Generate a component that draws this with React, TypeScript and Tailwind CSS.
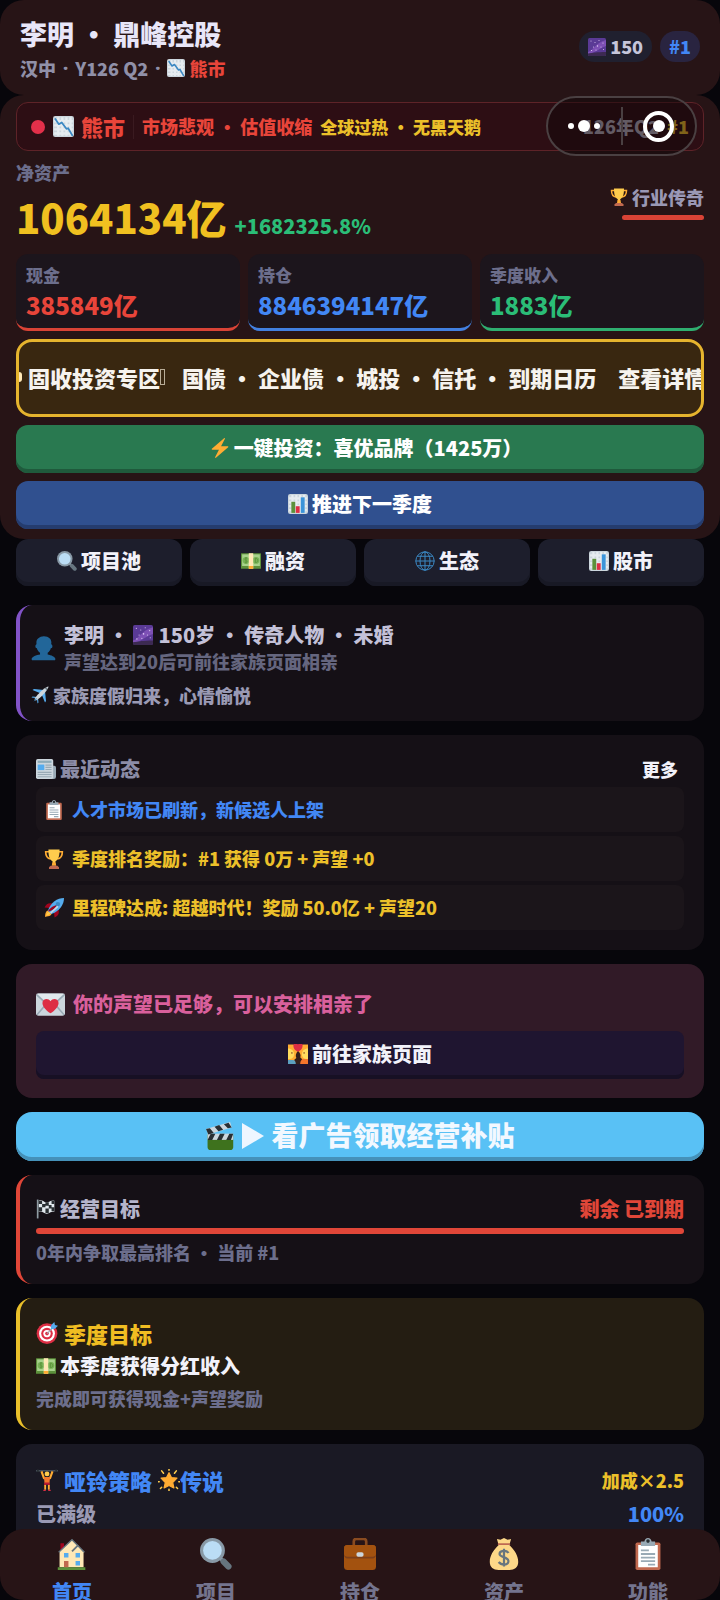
import React from 'react';

type IconProps = { className?: string };

const Glyph: React.FC<IconProps & { children: React.ReactNode }> = ({ className = 'size-5', children }) => (
  <svg viewBox="0 0 36 36" className={`inline-block shrink-0 ${className}`} aria-hidden="true">
    {children}
  </svg>
);

const ChartDown: React.FC<IconProps> = (p) => (
  <Glyph {...p}>
    <rect width="36" height="36" rx="4" fill="#ccd6dd" />
    <path d="M2 9h32M2 16h32M2 23h32M2 30h32M9 2v32M16 2v32M23 2v32M30 2v32" stroke="#e6ecf0" strokeWidth="4" />
    <path d="M4 5l6 9 5-3 8 11 3-1 7 12" fill="none" stroke="#3b88c3" strokeWidth="3" strokeLinejoin="round" strokeLinecap="round" />
  </Glyph>
);

const BarChart: React.FC<IconProps> = (p) => (
  <Glyph {...p}>
    <rect width="36" height="36" rx="4" fill="#ccd6dd" />
    <path d="M2 8h32M2 15h32M2 22h32M2 29h32M8 2v32M15 2v32M22 2v32M29 2v32" stroke="#e6ecf0" strokeWidth="4" />
    <path fill="#5c913b" d="M6 14h7v20H6z" />
    <path fill="#dd2e44" d="M14 22h7v12h-7z" />
    <path fill="#3b94d9" d="M23 6h7v28h-7z" />
  </Glyph>
);

const Galaxy: React.FC<IconProps> = (p) => (
  <Glyph {...p}>
    <rect width="36" height="36" rx="3" fill="#5a3a96" />
    <path d="M0 28C10 26 14 10 36 4v12C22 20 16 30 0 32z" fill="#7d50b5" />
    <path d="M0 31c10-1 18-3 36-3v5a3 3 0 0 1-3 3H3a3 3 0 0 1-3-3z" fill="#3c2a52" />
    <g fill="#e1cdf7">
      <circle cx="6" cy="6" r="1" /><circle cx="14" cy="9" r="1" /><circle cx="22" cy="5" r="1" />
      <circle cx="30" cy="10" r="1.2" /><circle cx="19" cy="16" r="1.4" /><circle cx="11" cy="18" r="1" />
      <circle cx="26" cy="18" r="1" /><circle cx="31" cy="23" r="1" /><circle cx="7" cy="25" r="1.2" />
      <circle cx="16" cy="24" r="1" />
    </g>
  </Glyph>
);

const Trophy: React.FC<IconProps> = (p) => (
  <Glyph {...p}>
    <path d="M9 5H3c0 8 3 12 9 13M27 5h6c0 8-3 12-9 13" fill="none" stroke="#ffac33" strokeWidth="3" />
    <path d="M8 1h20c0 10-1 17-7 21-1 1-1 3-1 7h-4c0-4 0-6-1-7C9 18 8 11 8 1z" fill="#ffcc4d" />
    <path d="M15 24h6l1 6h-8z" fill="#ffac33" />
    <path d="M12 30h12l3 3v3H9v-3z" fill="#c1694f" />
  </Glyph>
);

const Bolt: React.FC<IconProps> = (p) => (
  <Glyph {...p}>
    <path fill="#ffac33" d="M32.9 15.7c-.1-.4-.5-.7-.9-.7H19.9L26.9 1.5c.2-.4.1-.9-.3-1.2-.4-.3-.9-.3-1.3 0L18 6.6 3.3 19.2c-.3.3-.4.7-.3 1.1.2.4.6.7 1 .7h12.1L9.1 34.5c-.2.4-.1.9.3 1.2.4.3.9.3 1.3 0L18 29.4l14.7-12.7c.3-.2.4-.7.2-1z" />
  </Glyph>
);

const Magnifier: React.FC<IconProps> = (p) => (
  <Glyph {...p}>
    <path d="M22 22l4 4" stroke="#9aaab4" strokeWidth="4" />
    <path d="M26.5 26.5l5.500 5.500" stroke="#66757f" strokeWidth="7" strokeLinecap="round" />
    <circle cx="14" cy="14" r="14" fill="#8899a6" />
    <circle cx="14" cy="14" r="10.5" fill="#bbddf5" />
  </Glyph>
);

const Banknote: React.FC<IconProps> = (p) => (
  <Glyph {...p}>
    <rect y="4" width="36" height="28" rx="1" fill="#5c913b" />
    <rect x="2" y="6" width="32" height="21" fill="#a7d28b" />
    <circle cx="9" cy="17" r="6" fill="#77b255" />
    <circle cx="27" cy="17" r="6" fill="#77b255" />
    <path d="M11 13c-4-2-5 3-2 4s2 5-2 3M9 11v12M26 13c5 0 6 8 0 8z" fill="none" stroke="#5c913b" strokeWidth="1.5" />
    <path d="M14 4h8v28h-8z" fill="#ffe8b6" />
    <path d="M14 27h8v5h-8z" fill="#ffac33" />
  </Glyph>
);

const Globe: React.FC<IconProps> = (p) => (
  <Glyph {...p}>
    <g fill="none" stroke="#3b88c3" strokeWidth="1.8">
      <circle cx="18" cy="18" r="16.5" />
      <ellipse cx="18" cy="18" rx="9" ry="16.5" />
      <path d="M18 1v34M1 18h34M4 9.5h28M4 26.5h28" />
    </g>
  </Glyph>
);

const Bust: React.FC<IconProps> = (p) => (
  <Glyph {...p}>
    <path fill="#226699" d="M24 26.799v-2.566c2-1.348 4.080-3.779 4.703-6.896.186.103.206.170.413.170.991 0 1.709-1.287 1.709-2.873 0-1.562-.823-2.827-1.794-2.865.187-.674.293-1.577.293-2.735C29.324 5.168 26 .527 18.541.527c-6.629 0-10.777 4.641-10.777 8.507 0 1.123.069 2.043.188 2.755-.911.137-1.629 1.352-1.629 2.845 0 1.587.804 2.873 1.796 2.873.206 0 .025-.067.209-.170C8.952 20.453 11 22.885 13 24.232v2.414c-5 .645-12 3.437-12 6.230v1.061C1 35 2.076 35 3.137 35h29.725C33.924 35 35 35 35 33.938v-1.061c0-2.615-6-5.225-11-6.078z" />
  </Glyph>
);

const Plane: React.FC<IconProps> = (p) => (
  <Glyph {...p}>
    <path d="M20 15L3 8l3-2 20 2zM21 16l7 17 2-3-2-20zM9 24l-8-1 2-2 9 1zM12 27l1 8 2-2-1-9z" fill="#55acee" />
    <path d="M8 24C14 16 24 5 34 1c1 0 1 1 1 1-4 10-15 20-23 26-3 2-6 0-4-4z" fill="#ccd6dd" />
    <path d="M10 24L5 31l7-5z" fill="#3b88c3" />
    <path d="M30 3l3 3-2 2-3-3z" fill="#66757f" />
  </Glyph>
);

const Newspaper: React.FC<IconProps> = (p) => (
  <Glyph {...p}>
    <path d="M26 12h7a3 3 0 0 1 3 3v17a4 4 0 0 1-4 4h-6z" fill="#99aab5" />
    <rect width="31" height="36" rx="3" fill="#ccd6dd" />
    <path d="M3 3h25v4H3z" fill="#8dabb8" />
    <path d="M3 10h12v10H3z" fill="#55acee" />
    <path d="M17 11h11M17 15h11M17 19h11M3 24h25M3 28h25M3 32h25" stroke="#99aab5" strokeWidth="2" />
  </Glyph>
);

const Clipboard: React.FC<IconProps> = (p) => (
  <Glyph {...p}>
    <rect x="4" y="5" width="28" height="31" rx="2" fill="#c1694f" />
    <path d="M7 8h22v25H7z" fill="#fff" />
    <path d="M10 4h4c0-2 2-4 4-4s4 2 4 4h4v5H10z" fill="#99aab5" />
    <circle cx="18" cy="3.5" r="2" fill="#292f33" />
    <path d="M10 14h9M10 18h16M10 22h16M10 26h16M18 30h8" stroke="#99aab5" strokeWidth="2" />
  </Glyph>
);

const Rocket: React.FC<IconProps> = (p) => (
  <Glyph {...p}>
    <path d="M1 17c3-7 8-9 14-7l-5 8zM19 35c7-3 9-8 7-14l-8 5z" fill="#a0041e" />
    <path d="M2 34c0-7 2-12 7-12s7 6 3 9c-3 2-6 2-10 3z" fill="#ffac33" />
    <path d="M4 32c1-4 2-7 5-7 2 0 3 3 1 4-2 2-4 2-6 3z" fill="#ffcc4d" />
    <path d="M36 0C24 0 12 8 7 23l6 6C28 24 36 12 36 0z" fill="#55acee" />
    <path d="M9 21c-2 2-1 4 1 3 6-2 11-7 14-12C17 14 12 17 9 21z" fill="#a0041e" />
    <circle cx="25" cy="11" r="4" fill="#3b88c3" />
    <path d="M12 27l13-12" stroke="#ccd6dd" strokeWidth="3" />
  </Glyph>
);

const LoveLetter: React.FC<IconProps> = ({ className = 'h-6 w-7' }) => (
  <svg viewBox="0 0 36 28" className={`inline-block shrink-0 ${className}`} aria-hidden="true">
    <rect width="36" height="28" rx="3" fill="#ccd6dd" />
    <path d="M1 27l12-14M35 27L23 13M1 2l15 14c1 1 3 1 4 0L35 2" stroke="#99aab5" strokeWidth="2" fill="none" />
    <path d="M2 1h32L19 15h-2z" fill="#e1e8ed" />
    <path d="M18 25C12 21 8 16 8 12c0-5 7-7 10-2 3-5 10-3 10 2 0 4-4 9-10 13z" fill="#dd2e44" />
  </svg>
);

const Couple: React.FC<IconProps> = (p) => (
  <Glyph {...p}>
    <path d="M0 1h10l8 12L26 1h10v35H0z" fill="#ffac33" />
    <path d="M18 12c-4 5-5 9-3 13l-4 4 2 7h10l3-8-4-4c2-3 0-8-4-12z" fill="#35201b" />
    <path d="M0 8c6 0 11 4 11 11 0 5-4 8-8 8H0zM36 8c-6 0-11 4-11 11 0 5 4 8 8 8h3z" fill="#ffdc5d" />
    <path d="M18 14c-7-3-9-8-8-14h7l1 1 1-1h7c1 6-1 11-8 14z" fill="#dd2e44" />
    <path d="M0 29h9c3 0 5 3 5 7H0z" fill="#5c9fc0" />
    <path d="M36 27h-9c-3 1-5 4-5 9h14z" fill="#f4762c" />
    <circle cx="7" cy="16" r="1.3" fill="#662113" />
    <circle cx="29" cy="16" r="1.3" fill="#662113" />
  </Glyph>
);

const Clapper: React.FC<IconProps> = (p) => (
  <Glyph {...p}>
    <path d="M2 16h33v16a4 4 0 0 1-4 4H6a4 4 0 0 1-4-4z" fill="#3e721d" />
    <path d="M2 15h33v8H2z" fill="#ccd6dd" />
    <path d="M6 15h6l-4 8H2zM18 15h6l-4 8h-6zM30 15h5l-3 8h-6z" fill="#292f33" />
    <path d="M0 9L31 0l2 7L3 16z" fill="#ccd6dd" />
    <path d="M0 9l5-1 5 6-7 2zM11 6l6-2 5 6-6 2zM23 3l6-2 4 6-5 1z" fill="#292f33" />
  </Glyph>
);

const PlayMark: React.FC<IconProps> = ({ className = 'size-6' }) => (
  <svg viewBox="0 0 22 26" className={`inline-block shrink-0 ${className}`} aria-hidden="true">
    <path d="M0 0l22 13L0 26z" fill="#eef6ff" />
  </svg>
);

const RaceFlag: React.FC<IconProps> = (p) => (
  <Glyph {...p}>
    <path d="M3 1v34" stroke="#8f9ca3" strokeWidth="3" />
    <path d="M5 3c7-3 10 5 16 3 5-2 7-4 12-3v20c-5-1-7 1-12 3-6 2-9-5-16-3z" fill="#e1e8ed" />
    <path d="M5 3h6v6H5zM17 6h6v6h-6zM28 3h5v6h-5zM11 9h6v6h-6zM23 11h5v6h-5zM5 15h6v7H5zM17 17h6v8h-6zM28 15h5v7h-5z" fill="#292f33" />
  </Glyph>
);

const Target: React.FC<IconProps> = (p) => (
  <Glyph {...p}>
    <circle cx="18" cy="19" r="17" fill="#dd2e44" />
    <circle cx="18" cy="19" r="13" fill="#fff" />
    <circle cx="18" cy="19" r="9.5" fill="#dd2e44" />
    <circle cx="18" cy="19" r="6" fill="#fff" />
    <circle cx="18" cy="19" r="3" fill="#dd2e44" />
    <path d="M18 19L29 8" stroke="#99aab5" strokeWidth="2" />
    <path d="M24 12l1-7 5-5 1 5 5 1-5 5z" fill="#55acee" />
  </Glyph>
);

const Lifter: React.FC<IconProps> = (p) => (
  <Glyph {...p}>
    <path d="M0 3h36" stroke="#66757f" strokeWidth="1.5" />
    <path d="M3 1v4M33 1v4" stroke="#292f33" strokeWidth="3" />
    <path d="M9 4l4 11h10l4-11" fill="none" stroke="#ffac33" strokeWidth="3.5" strokeLinejoin="round" />
    <circle cx="18" cy="8" r="4" fill="#ffcc4d" />
    <path d="M13 13h10l-1 11h-8z" fill="#f4762c" />
    <path d="M14 22h8l1 5h-3l-2-2-2 2h-3z" fill="#be1931" />
    <path d="M15 26v8M21 26v8" stroke="#ffac33" strokeWidth="3" />
    <path d="M12 35h4M20 35h4" stroke="#dd2e44" strokeWidth="2" />
  </Glyph>
);

const GlowStar: React.FC<IconProps> = (p) => (
  <Glyph {...p}>
    <path d="M18 6l4 8 9 1-7 7 2 9-8-4-8 4 2-9-7-7 9-1z" fill="#ffac33" stroke="#ffac33" strokeWidth="2" strokeLinejoin="round" />
    <path d="M18 0v2M6 3l3 4M30 3l-3 4M0 21h2M34 21h2M4 32l2-2M32 32l-2-2M18 33v3" stroke="#ffcc4d" strokeWidth="2.5" strokeLinecap="round" />
  </Glyph>
);

const House: React.FC<IconProps> = (p) => (
  <Glyph {...p}>
    <path d="M5 6h4v8H5z" fill="#a0041e" />
    <path d="M4 15L18 2l13 14v17H4z" fill="#ffe8b6" />
    <path d="M3 16L18 2l14 14" fill="none" stroke="#66757f" strokeWidth="1.5" />
    <path d="M18 15l7-7" stroke="#66757f" strokeWidth="2" />
    <path d="M9 17h5v5H9zM22 17h5v5h-5zM22 26h5v5h-5z" fill="#55acee" />
    <path d="M9 26h5v8H9z" fill="#c1694f" />
    <path d="M2 33h31v3H2z" fill="#5c913b" />
  </Glyph>
);

const Briefcase: React.FC<IconProps> = (p) => (
  <Glyph {...p}>
    <path d="M11 9V4c0-2 1-3 3-3h8c2 0 3 1 3 3v5" fill="none" stroke="#8a4b20" strokeWidth="3" />
    <rect y="8" width="36" height="28" rx="4" fill="#a3520f" />
    <path d="M4 8h28a4 4 0 0 1 4 4v7c0 2-2 4-4 4H4c-2 0-4-2-4-4v-7a4 4 0 0 1 4-4z" fill="#7c3f1a" />
    <path d="M4 8h28a4 4 0 0 1 4 4v6c0 2-2 3-4 3H4c-2 0-4-1-4-3v-6a4 4 0 0 1 4-4z" fill="#a3520f" />
    <rect x="14" y="16" width="8" height="5" rx="2" fill="#ccd6dd" />
  </Glyph>
);

const MoneyBag: React.FC<IconProps> = (p) => (
  <Glyph {...p}>
    <path d="M12 8L10 1l4 1 4-2 4 2 4-1-2 7c6 6 10 12 10 19 0 6-4 9-10 9H12c-6 0-10-3-10-9C2 20 6 14 12 8z" fill="#fdd888" />
    <path d="M12 7h12" stroke="#bf6952" strokeWidth="2" strokeLinecap="round" />
    <path d="M23 17c-2-4-10-3-10 1s10 3 10 8-8 5-11 1M18 12v20" fill="none" stroke="#67757f" strokeWidth="2.5" />
  </Glyph>
);

const stats = [
  { label: '现金', value: '385849亿', style: 'border-[#d94336] text-[#e8453a]' },
  { label: '持仓', value: '8846394147亿', style: 'border-[#4280e0] text-[#4287f5]' },
  { label: '季度收入', value: '1883亿', style: 'border-[#2fae70] text-[#2bbd77]' }
];

const shortcuts = [
  { label: '项目池', icon: Magnifier },
  { label: '融资', icon: Banknote },
  { label: '生态', icon: Globe },
  { label: '股市', icon: BarChart }
];

const news = [
  { text: '人才市场已刷新，新候选人上架', icon: Clipboard, color: 'text-[#4287f5]' },
  { text: '季度排名奖励：#1 获得 0万 + 声望 +0', icon: Trophy, color: 'text-[#ecc02a]' },
  { text: '里程碑达成: 超越时代！奖励 50.0亿 + 声望20', icon: Rocket, color: 'text-[#ecc02a]' }
];

const tabs = [
  { label: '首页', icon: House, active: true },
  { label: '项目', icon: Magnifier, active: false },
  { label: '持仓', icon: Briefcase, active: false },
  { label: '资产', icon: MoneyBag, active: false },
  { label: '功能', icon: Clipboard, active: false }
];

const Header: React.FC = () => (
  <header className="flex items-start justify-between rounded-3xl bg-[#271416] px-5 pt-4 pb-[13px]">
    <div className="flex flex-col gap-0.5">
      <h1 className="text-[27px] leading-9 text-[#e8e6f8]">李明 • 鼎峰控股</h1>
      <p className="flex items-center gap-[7px] text-[18px] leading-7 text-[#9090a8]">
        <span>汉中</span>
        <span className="font-['Noto_Sans',sans-serif]">·</span>
        <span>Y126 Q2</span>
        <span className="font-['Noto_Sans',sans-serif]">·</span>
        <span className="flex items-center gap-1 text-[#e8453a]">
          <ChartDown className="size-[18px]" />
          熊市
        </span>
      </p>
    </div>
    <div className="mt-[15px] flex gap-2 text-[18px] leading-[31px]">
      <span className="flex items-center gap-1 rounded-2xl bg-[#20202f] px-[9px] text-[#c5c5da]">
        <Galaxy className="size-[18px]" />
        150
      </span>
      <span className="rounded-2xl bg-[#292440] px-[9px] text-[#4287f5]">#1</span>
    </div>
  </header>
);

const MarketBar: React.FC = () => (
  <div className="relative flex h-[49px] items-center rounded-xl border border-[#5e2328] bg-[#2d0e14] px-3.5 whitespace-nowrap">
    <span className="size-3.5 rounded-full bg-[#e2304a]" />
    <ChartDown className="ml-2 size-[21px]" />
    <span className="ml-[7px] text-[22px] text-[#e8453a]">熊市</span>
    <span className="ml-2 h-6 w-px bg-[#3a1a20]" />
    <span className="ml-2 text-[18px] text-[#e8453a]">市场悲观 • 估值收缩</span>
    <span className="ml-2 text-[17px] text-[#ecc02a]">全球过热 • 无黑天鹅</span>
    <span className="ml-auto text-[18px] text-[#b4b0c0]">126年Q2</span>
    <span className="ml-2 text-[18px] text-[#ecc02a]">#1</span>

    {/* Mini-program capsule floats over the bar */}
    <div className="absolute -top-[7px] right-1.5 flex h-[60px] w-[151px] items-center rounded-full border-2 border-[#4a4042] bg-[#120507]/50">
      <button type="button" aria-label="更多操作" className="flex h-full flex-1 items-center justify-center gap-1">
        <span className="size-1.5 rounded-full bg-white" />
        <span className="size-3 rounded-full bg-white" />
        <span className="size-1.5 rounded-full bg-white" />
      </button>
      <span className="h-[38px] w-0.5 bg-[#4a4042]" />
      <button type="button" aria-label="关闭" className="flex h-full flex-1 items-center justify-center">
        <span className="flex size-[31px] items-center justify-center rounded-full border-4 border-white">
          <span className="size-3 rounded-full bg-white" />
        </span>
      </button>
    </div>
  </div>
);

const Overview: React.FC = () => (
  <section className="rounded-3xl bg-[#271416] px-4 pt-[7px] pb-2.5">
    <MarketBar />

    <div className="mt-[7px] flex items-center justify-between">
      <div>
        <p className="text-[18px] leading-7 text-[#6c6e8c]">净资产</p>
        <p className="mt-1 flex items-baseline gap-2 text-[40px] leading-[54px] text-[#f0c020]">
          1064134亿
          <span className="text-[20px] leading-none text-[#2bbd77]">+1682325.8%</span>
        </p>
      </div>
      <div className="flex flex-col items-end gap-1">
        <p className="flex items-center gap-1 text-[18px] leading-7 text-[#9a98b5]">
          <Trophy className="size-[18px]" />
          行业传奇
        </p>
        <span className="h-[5px] w-[82px] rounded-full bg-[#d94336]" />
      </div>
    </div>

    <div className="mt-[10px] grid grid-cols-3 gap-2">
      {stats.map((stat) => (
        <div key={stat.label} className={`rounded-xl border-b-3 bg-[#1c151c] px-2.5 pt-[9px] pb-[5px] ${stat.style}`}>
          <p className="text-[17px] leading-6 text-[#6c6e8c]">{stat.label}</p>
          <p className="text-[24px] leading-9">{stat.value}</p>
        </div>
      ))}
    </div>

    <div className="mt-2 flex h-[78px] items-center overflow-hidden rounded-2xl border-3 border-[#e6b42e] bg-[#392710] pb-0.5 text-[22px] whitespace-nowrap text-[#f6f3ee]">
      <span className="h-2.5 w-[3px] shrink-0 rounded-r-full bg-[#ffe8b6]" />
      <span className="ml-1.5">固收投资专区</span>
      <span className="mr-[17px] h-4 w-[5px] shrink-0 border border-[#b9ad98]" />
      <span>国债 • 企业债 • 城投 • 信托 • 到期日历</span>
      <span className="ml-[22px]">查看详情</span>
    </div>

    <button type="button" className="mt-2 flex h-12 w-full items-center justify-center gap-1 rounded-xl bg-[#297950] pb-0.5 pl-3 text-[20px] text-white shadow-[inset_0_-4px_0_#1f5a3c]">
      <Bolt />
      一键投资：喜优品牌（1425万）
    </button>
    <button type="button" className="mt-2 flex h-12 w-full items-center justify-center gap-1 rounded-xl bg-[#30508f] pb-0.5 text-[20px] text-white shadow-[inset_0_-4px_0_#253c6e]">
      <BarChart />
      推进下一季度
    </button>
  </section>
);

export default function App() {
  return (
    <div className="flex h-screen flex-col overflow-hidden bg-[#07060b] font-['Noto_Sans_CJK_SC',sans-serif] font-black">
      <div className="min-h-0 flex-1 overflow-hidden">
        <Header />
        <Overview />

        <main className="px-4">
          <div className="grid grid-cols-4 gap-2">
            {shortcuts.map((item) => (
              <button key={item.label} type="button" className="flex h-[47px] items-center justify-center gap-1 rounded-xl bg-[#1d1e2c] pb-1 text-[20px] text-[#f2f2fa] shadow-[inset_0_-4px_0_#181925]">
                <item.icon />
                {item.label}
              </button>
            ))}
          </div>

          <div className="mt-[19px] flex flex-col gap-3.5">
            {/* Character */}
            <section className="rounded-2xl border-l-4 border-[#8253c8] bg-[#151016] pt-[17px] pr-5 pb-[13px] pl-[11px]">
              <div className="flex items-center gap-2">
                <Bust className="size-[25px]" />
                <div>
                  <h2 className="flex items-center text-[20px] leading-[26px] text-[#c3c1d8]">
                    <span>李明 •</span>
                    <Galaxy className="mr-1.5 ml-1 size-5" />
                    <span>150岁 • 传奇人物 • 未婚</span>
                  </h2>
                  <p className="text-[18px] leading-[26px] text-[#65667f]">声望达到20后可前往家族页面相亲</p>
                </div>
              </div>
              <p className="mt-2 flex items-center gap-1 text-[18px] leading-[26px] text-[#9a9ab4]">
                <Plane className="size-[18px]" />
                家族度假归来，心情愉悦
              </p>
            </section>

            {/* News */}
            <section className="rounded-2xl bg-[#151016] p-5">
              <div className="flex items-center justify-between">
                <h2 className="flex items-center gap-1 text-[20px] leading-7 text-[#8c8ca6]">
                  <Newspaper />
                  最近动态
                </h2>
                <button type="button" className="mr-1.5 text-[18px] leading-6 text-[#f2f2fa]">更多</button>
              </div>
              <ul className="mt-1 flex flex-col gap-1">
                {news.map((item) => (
                  <li key={item.text} className={`flex h-[45px] items-center gap-2 rounded-lg bg-[#1b151a] px-2 text-[18px] ${item.color}`}>
                    <item.icon />
                    {item.text}
                  </li>
                ))}
              </ul>
            </section>

            {/* Matchmaking */}
            <section className="rounded-2xl bg-[#311a27] px-5 pt-[26px] pb-[19px]">
              <p className="flex items-center gap-2 text-[20px] leading-7 text-[#d9609c]">
                <LoveLetter className="h-[23px] w-[29px]" />
                你的声望已足够，可以安排相亲了
              </p>
              <button type="button" className="mt-[13px] flex h-12 w-full items-center justify-center gap-1 rounded-lg bg-[#1f1530] pb-0.5 text-[20px] text-[#f2f2fa] shadow-[inset_0_-4px_0_#171024]">
                <Couple />
                前往家族页面
              </button>
            </section>

            <button type="button" className="flex h-[49px] items-center justify-center gap-2 rounded-2xl bg-[#59c1f5] pb-0.5 text-[27px] text-[#f2f8ff] shadow-[inset_0_-4px_0_#4591b9]">
              <Clapper className="size-7" />
              <PlayMark className="h-[26px] w-[22px]" />
              看广告领取经营补贴
            </button>

            {/* Business goal */}
            <section className="rounded-2xl border-l-4 border-[#e04638] bg-[#151016] pt-5 pr-5 pb-[19px] pl-4">
              <div className="flex items-center justify-between text-[20px] leading-7">
                <h2 className="flex items-center gap-1 text-[#b5b5cc]">
                  <RaceFlag />
                  经营目标
                </h2>
                <span className="text-[#e04638]">剩余 已到期</span>
              </div>
              <div className="mt-[5px] h-1.5 rounded-full bg-[#e04638]" />
              <p className="mt-[5px] text-[18px] leading-[26px] text-[#6c6e8c]">0年内争取最高排名 • 当前 #1</p>
            </section>

            {/* Quarter goal */}
            <section className="flex flex-col gap-px rounded-2xl border-l-4 border-[#e9bf2a] bg-[#241d12] pt-[19px] pr-5 pb-[17px] pl-4">
              <h2 className="flex items-center gap-1.5 text-[22px] leading-8 text-[#f0bd22]">
                <Target className="size-[22px]" />
                季度目标
              </h2>
              <p className="flex items-center gap-1 text-[20px] leading-8 text-[#f2f2fa]">
                <Banknote />
                本季度获得分红收入
              </p>
              <p className="text-[18px] leading-[30px] text-[#6c6e8c]">完成即可获得现金+声望奖励</p>
            </section>

            {/* Strategy */}
            <section className="flex flex-col gap-0.5 rounded-2xl bg-[#1a1924] px-5 pt-5 pb-5">
              <div className="flex items-center justify-between">
                <h2 className="flex items-center text-[22px] leading-8 text-[#4287f5]">
                  <Lifter className="mr-1.5 size-[22px]" />
                  哑铃策略
                  <GlowStar className="ml-1.5 size-[22px]" />
                  传说
                </h2>
                <span className="text-[18px] text-[#ecc02a]">加成×2.5</span>
              </div>
              <div className="flex items-center justify-between text-[20px] leading-8">
                <span className="text-[#9a9ab4]">已满级</span>
                <span className="text-[#4287f5]">100%</span>
              </div>
            </section>
          </div>
        </main>
      </div>

      <nav className="relative z-10 -mt-[71px] grid h-[71px] shrink-0 grid-cols-5 overflow-hidden rounded-3xl bg-[#271416]">
        {tabs.map((tab) => (
          <a key={tab.label} href="#" className={`flex flex-col items-center gap-2 pt-[9px] text-[20px] leading-7 ${tab.active ? 'text-[#4287f5]' : 'text-[#74748e]'}`}>
            <tab.icon className="size-8 shrink-0" />
            {tab.label}
          </a>
        ))}
      </nav>
    </div>
  );
}
